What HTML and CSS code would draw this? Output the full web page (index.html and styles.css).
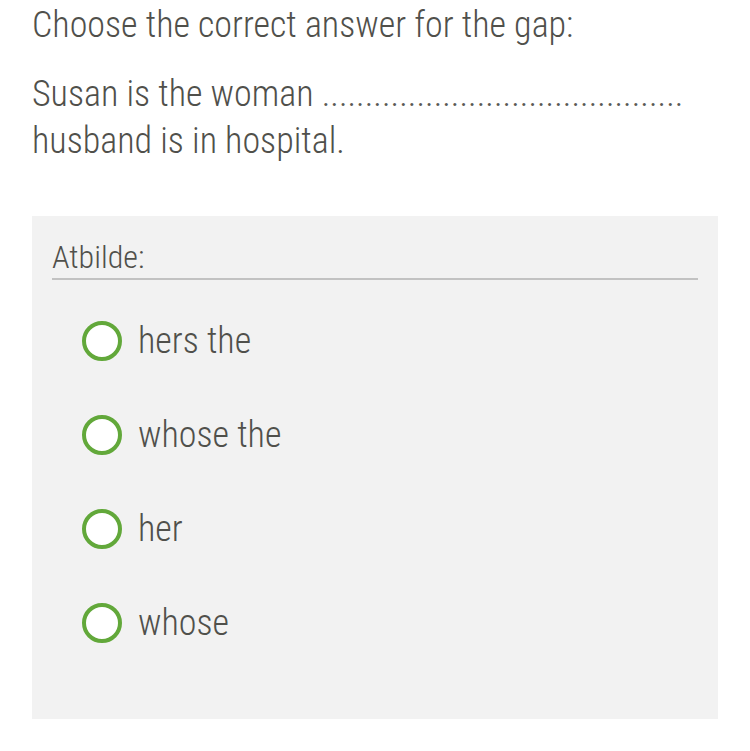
FILE: index.html
```html
<!DOCTYPE html>
<html>
<head>
<meta charset="utf-8">
<link rel="stylesheet" href="styles.css">
</head>
<body>
<div class="page">
  <p class="question">Choose the correct answer for the gap:</p>
  <p class="sentence">Susan is the woman <span class="gap">..........................................</span> husband is in hospital.</p>
  <div class="answer">
    <div class="answer-label">Atbilde:</div>
    <ul class="options">
      <li class="option"><span class="radio"></span><span class="opt-text">hers the</span></li>
      <li class="option"><span class="radio"></span><span class="opt-text">whose the</span></li>
      <li class="option"><span class="radio"></span><span class="opt-text">her</span></li>
      <li class="option"><span class="radio"></span><span class="opt-text">whose</span></li>
    </ul>
  </div>
</div>
</body>
</html>
```
FILE: styles.css
```css
html, body {
  margin: 0;
  padding: 0;
  background: #ffffff;
}
body {
  font-family: Roboto, "Liberation Sans", sans-serif;
  font-weight: 300;
  font-stretch: condensed;
  color: #50504b;
}
.page {
  padding: 0 32px;
}
.question {
  margin: 0;
  padding-top: 3px;
  font-size: 36px;
  line-height: 44px;
}
.sentence {
  margin: 24px 0 0 0;
  font-size: 36px;
  line-height: 47px;
}
.gap {
  white-space: nowrap;
  color: #5a5a55;
}
.answer {
  margin-top: 51px;
  background: #f2f2f2;
  padding: 21px 20px 76px 20px;
  width: 686px;
  box-sizing: border-box;
}
.answer-label {
  font-size: 32px;
  line-height: 40px;
  padding-bottom: 1px;
  border-bottom: 2px solid #c2c2c2;
}
.options {
  list-style: none;
  margin: 0;
  padding: 41px 0 0 30px;
  display: flex;
  flex-direction: column;
  gap: 54px;
}
.option {
  display: flex;
  align-items: center;
  gap: 16px;
  height: 40px;
}
.radio {
  width: 40px;
  height: 40px;
  box-sizing: border-box;
  border: 4px solid #62a83a;
  border-radius: 50%;
  background: #ffffff;
  flex: none;
}
.opt-text {
  font-size: 36px;
  line-height: 40px;
}
```
